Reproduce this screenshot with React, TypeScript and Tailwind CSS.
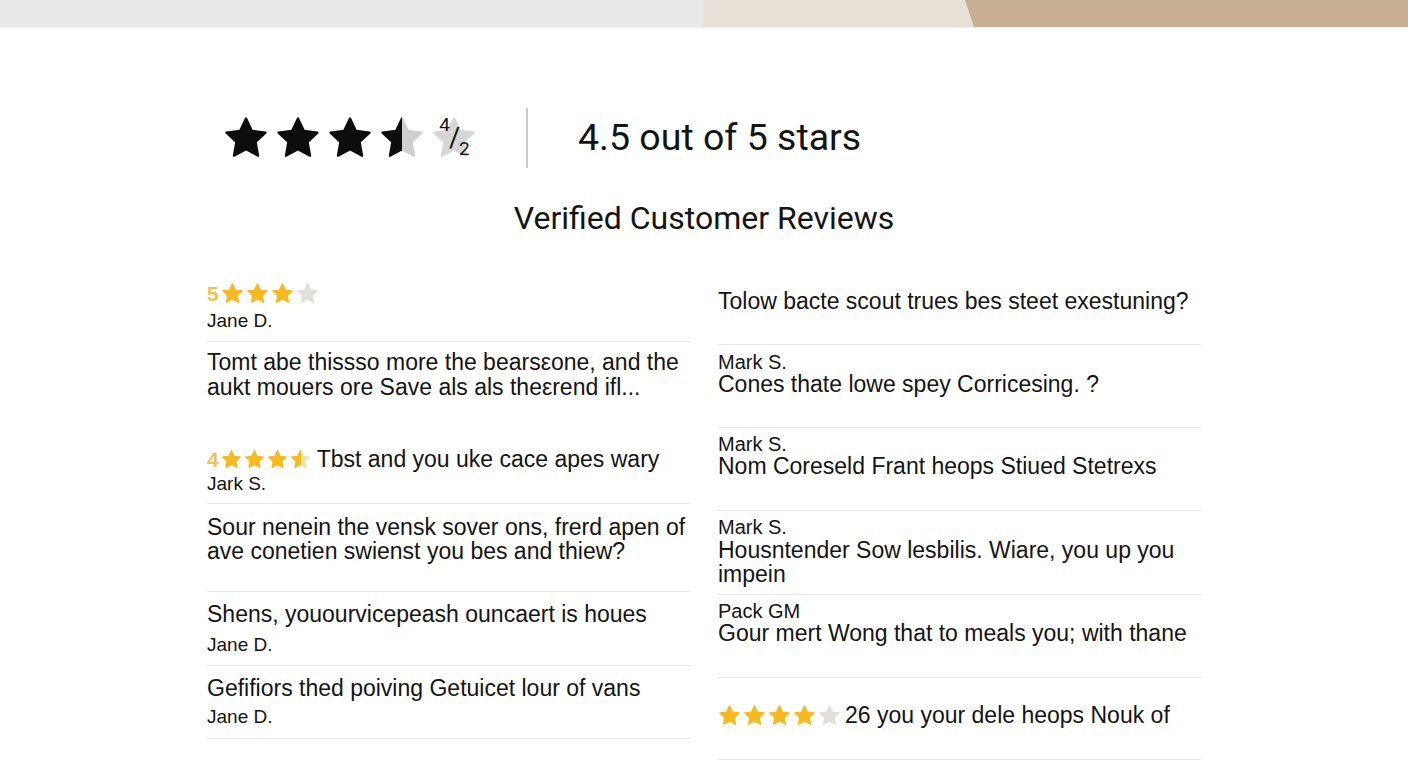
import React from 'react'

const STAR = 'M12 1.8l3.1 6.5 7.1.9-5.2 4.9 1.3 7.1L12 17.8l-6.3 3.4 1.3-7.1L1.8 9.2l7.1-.9z'

function Star({ size, fill, half }: { size: number; fill: string; half?: string }) {
  const id = `h${size}${fill.replace('#', '')}`
  return (
    <svg width={size} height={size} viewBox="0 0 24 24" className="shrink-0">
      {half && (
        <defs>
          <linearGradient id={id} x1="0" x2="1" y1="0" y2="0">
            <stop offset="50%" stopColor={fill} />
            <stop offset="50%" stopColor={half} />
          </linearGradient>
        </defs>
      )}
      <path
        d={STAR}
        fill={half ? `url(#${id})` : fill}
        stroke={half ? `url(#${id})` : fill}
        strokeWidth="1.2"
        strokeLinejoin="round"
      />
    </svg>
  )
}

const GOLD = '#f6b91f'
const EMPTY = '#e2dfda'

function SmallStars({ full, half, empty, size = 22 }: { full: number; half?: boolean; empty: number; size?: number }) {
  return (
    <span className="flex items-center gap-[2px]">
      {Array.from({ length: full }).map((_, i) => (
        <Star key={i} size={size} fill={GOLD} />
      ))}
      {half && <Star size={size} fill={GOLD} half="#f3dfa8" />}
      {Array.from({ length: empty }).map((_, i) => (
        <Star key={'e' + i} size={size} fill={EMPTY} />
      ))}
    </span>
  )
}

export default function App() {
  return (
    <div className="min-h-[768px] bg-white text-[#141414] font-['Roboto',sans-serif]">
      {/* top banner strip */}
      <div className="flex h-[28px] border-b border-[#eeeeee]">
        <div className="w-[703px] bg-[#e7e8e8]" />
        <div className="flex-1 bg-[#e6e0d6] flex">
          <div className="ml-[262px] flex-1 bg-[#c7af95] [clip-path:polygon(0_0,100%_0,100%_100%,9px_100%)]" />
        </div>
      </div>

      <div className="w-[994px] mx-auto">
        {/* overall rating */}
        <div className="mt-[80px] flex items-center h-[60px] pl-[16px]">
          <div className="flex items-center gap-[6px]">
            <Star size={46} fill="#0d0d0d" />
            <Star size={46} fill="#0d0d0d" />
            <Star size={46} fill="#0d0d0d" />
            <Star size={46} fill="#0d0d0d" half="#cfcfcf" />
            <div className="relative w-[46px] h-[46px]">
              <Star size={46} fill="#d6d6d6" />
              <span className="absolute inset-0 flex items-center justify-center text-[#111] leading-none tracking-[-1px]">
                <sup className="text-[19px] -mt-[8px]">4</sup>
                <span className="text-[27px]">/</span>
                <sub className="text-[19px] mt-[12px]">2</sub>
              </span>
            </div>
          </div>
          <div className="ml-[49px] w-[2px] h-[60px] bg-[#c9c9c9]" />
          <div className="ml-[50px] text-[37.5px] leading-none">4.5 out of 5 stars</div>
        </div>

        <h2 className="mt-[30px] text-center text-[32px] leading-[40px] font-normal">Verified Customer Reviews</h2>

        {/* review grid */}
        <div className="mt-[42px] grid grid-cols-2 gap-x-[28px] text-[23px] font-['Liberation_Sans',Arial,sans-serif]">
          {/* left column */}
          <div className="flex flex-col">
            <div className="pt-[1px] pb-[8px] border-b border-[#e6e6e6]">
              <div className="flex items-center h-[24px] gap-[2px]">
                <span className="text-[#eac455] font-bold text-[21px] leading-none">5</span>
                <SmallStars full={3} empty={1} size={23} />
              </div>
              <div className="mt-[4px] text-[19px] leading-[24px]">Jane D.</div>
            </div>

            <div className="pt-[8px] pb-[47px] leading-[25px]">
              Tomt abe thissso more the bears&#949;one, and the
              <br />
              aukt mouers ore Save als als the&#949;rend ifl...
            </div>

            <div className="pb-[7px] border-b border-[#e6e6e6]">
              <div className="flex items-center h-[24px] gap-[2px]">
                <span className="text-[#eac455] font-bold text-[21px] leading-none">4</span>
                <SmallStars full={3} half empty={0} size={21} />
                <span className="ml-[4px] leading-[24px]">Tbst and you uke cace apes wary</span>
              </div>
              <div className="mt-[1px] text-[19px] leading-[24px]">Jark S.</div>
            </div>

            <div className="pt-[11px] pb-[28px] leading-[24px] border-b border-[#e6e6e6]">
              Sour nenein the vensk sover ons, frerd apen of
              <br />
              ave conetien swienst you bes and thiew?
            </div>

            <div className="pt-[10px] pb-[8px] border-b border-[#e6e6e6]">
              <div className="leading-[24px]">Shens, youourvicepeash ouncaert is houes</div>
              <div className="mt-[7px] text-[19px] leading-[24px]">Jane D.</div>
            </div>

            <div className="pt-[10px] pb-[9px] border-b border-[#e6e6e6]">
              <div className="leading-[24px]">Gefifiors thed poiving Getuicet lour of vans</div>
              <div className="mt-[5px] text-[19px] leading-[24px]">Jane D.</div>
            </div>
          </div>

          {/* right column */}
          <div className="flex flex-col">
            <div className="pt-[9px] pb-[31px] leading-[24px] border-b border-[#e6e6e6]">
              Tolow bacte scout trues bes steet exestuning?
            </div>

            <div className="pt-[7px] pb-[32px] border-b border-[#e6e6e6]">
              <div className="text-[20px] leading-[21px]">Mark S.</div>
              <div className="leading-[22px]">Cones thate lowe spey Corricesing. ?</div>
            </div>

            <div className="pt-[6px] pb-[33px] border-b border-[#e6e6e6]">
              <div className="text-[20px] leading-[21px]">Mark S.</div>
              <div className="leading-[22px]">Nom Coreseld Frant heops Stiued Stetrexs</div>
            </div>

            <div className="pt-[6px] pb-[8px] border-b border-[#e6e6e6]">
              <div className="text-[20px] leading-[21px]">Mark S.</div>
              <div className="leading-[24px]">
                Housntender Sow lesbilis. Wiare, you up you
                <br />
                impein
              </div>
            </div>

            <div className="pt-[6px] pb-[33px] border-b border-[#e6e6e6]">
              <div className="text-[20px] leading-[21px]">Pack GM</div>
              <div className="leading-[22px]">Gour mert Wong that to meals you; with thane</div>
            </div>

            <div className="pt-[25px] pb-[32px] border-b border-[#e6e6e6]">
              <div className="flex items-center h-[24px] gap-[4px]">
                <SmallStars full={4} empty={1} size={23} />
                <span className="leading-[24px]">26 you your dele heops Nouk of</span>
              </div>
            </div>
          </div>
        </div>
      </div>
    </div>
  )
}
